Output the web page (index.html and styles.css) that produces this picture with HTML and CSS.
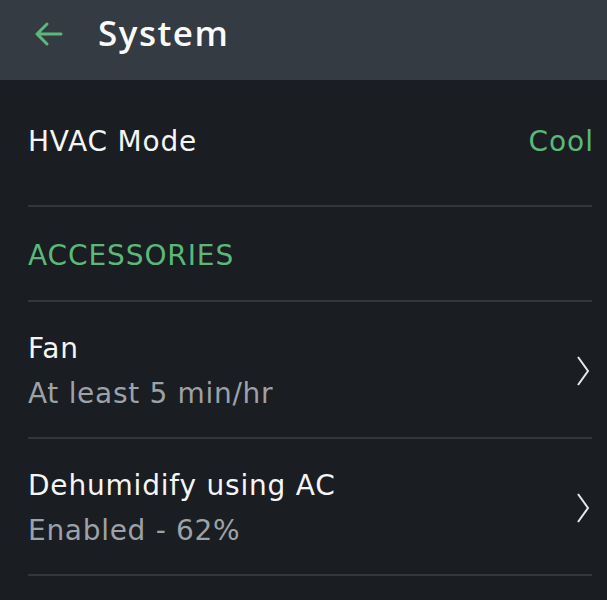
FILE: index.html
```html
<!DOCTYPE html>
<html>
<head>
<meta charset="utf-8">
<link rel="stylesheet" href="styles.css">
</head>
<body>
<header class="topbar">
  <svg class="back" width="30" height="28" viewBox="0 0 30 28"><path d="M28 14H4M14 4L4 14l10 10" fill="none" stroke="#5bb87a" stroke-width="3" stroke-linecap="round" stroke-linejoin="round"/></svg>
  <h1 class="title">System</h1>
</header>
<main class="list">
  <div class="row mode">
    <span class="label">HVAC Mode</span>
    <span class="value">Cool</span>
  </div>
  <div class="section">ACCESSORIES</div>
  <div class="row item">
    <div class="texts">
      <div class="label">Fan</div>
      <div class="sub">At least 5 min/hr</div>
    </div>
    <svg class="chev" width="14" height="32" viewBox="0 0 14 32"><path d="M2 2l10 14L2 30" fill="none" stroke="#e6e8ea" stroke-width="2"/></svg>
  </div>
  <div class="row item">
    <div class="texts">
      <div class="label">Dehumidify using AC</div>
      <div class="sub">Enabled - 62%</div>
    </div>
    <svg class="chev" width="14" height="32" viewBox="0 0 14 32"><path d="M2 2l10 14L2 30" fill="none" stroke="#e6e8ea" stroke-width="2"/></svg>
  </div>
</main>
</body>
</html>
```
FILE: styles.css
```css
html, body { margin: 0; padding: 0; background: #1a1d21; }
body { font-family: "DejaVu Sans", "Noto Sans", sans-serif; color: #f2f3f4; width: 607px; height: 600px; overflow: hidden; }
.topbar { height: 80px; background: #343b43; display: flex; align-items: center; padding: 0 0 15px 33px; box-sizing: border-box; }
.back { margin-right: 35px; margin-top: 2px; }
.title { margin: 0; font-family: "Open Sans", sans-serif; font-size: 35px; font-weight: 600; color: #fafafa; letter-spacing: 1.5px; }
.list { padding: 0 15px 0 28px; }
.row { display: flex; align-items: center; justify-content: space-between; border-bottom: 2px solid #33373c; }
.mode { height: 127px; padding-bottom: 2px; box-sizing: border-box; }
.label { font-size: 28px; color: #f5f5f5; letter-spacing: 0.8px; }
.value { font-size: 28px; color: #5bb87a; letter-spacing: 1px; margin-right: -2px; }
.section { height: 95px; padding-top: 3px; box-sizing: border-box; display: flex; align-items: center; font-size: 28px; color: #5bb87a; border-bottom: 2px solid #33373c; letter-spacing: 0.9px; }
.item { height: 137px; padding-top: 2px; box-sizing: border-box; }
.texts { display: flex; flex-direction: column; gap: 12px; }
.sub { font-size: 28px; color: #9ca2a8; letter-spacing: 0.7px; }
.chev { margin-right: 2px; }
```
